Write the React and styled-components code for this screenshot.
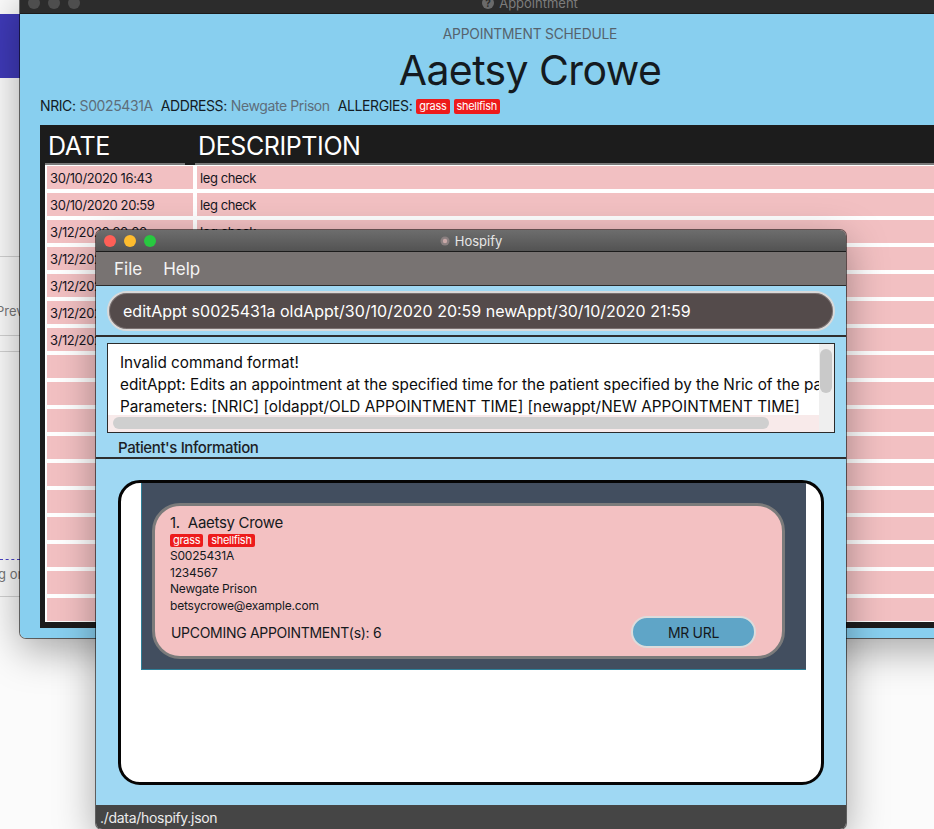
import React from "react";
import styled, { createGlobalStyle } from "styled-components";

const GlobalStyle = createGlobalStyle`
  html, body {
    margin: 0;
    padding: 0;
  }
  body {
    font-family: Inter, "Noto Sans", sans-serif;
    background: #ffffff;
  }
`;

const Desktop = styled.div`
  position: relative;
  width: 934px;
  height: 829px;
  overflow: hidden;
  background: #ffffff;
`;

/* browser page peeking out on the left */
const BrowserPage = styled.div`
  display: flex;
  flex-direction: column;
  height: 100%;
  background: #fbfbfb;
`;
const PageBanner = styled.div`
  margin-top: 14px;
  height: 64px;
  background: #3f3ab8;
`;
const PageRule = styled.div`
  margin-top: ${(p) => p.$gap}px;
  height: 1px;
  width: 20px;
  border-top: 1px ${(p) => (p.$dashed ? "dashed #4a43c9" : "solid #d2d2d2")};
`;
const PageText = styled.div`
  margin-top: ${(p) => p.$gap}px;
  margin-left: ${(p) => p.$shift}px;
  font-size: 13px;
  line-height: 16px;
  color: #777;
  white-space: nowrap;
`;

/* windows on the desktop */
const Window = styled.div`
  position: absolute;
  left: ${(p) => p.$left}px;
  top: ${(p) => p.$top}px;
  width: ${(p) => p.$width}px;
  height: ${(p) => p.$height}px;
  display: flex;
  flex-direction: column;
  border-radius: 6px;
  overflow: hidden;
  box-shadow: 0 12px 40px rgba(0, 0, 0, 0.35), 0 0 0 1px rgba(0, 0, 0, 0.55);
`;

const TitleBar = styled.div`
  position: relative;
  flex: none;
  height: 21px;
  display: flex;
  align-items: center;
  justify-content: center;
  gap: 5px;
  border-bottom: 1px solid #1b1b1b;
  background: ${(p) => (p.$dim ? "#2c2c2c" : "linear-gradient(#6d6d6d, #535353)")};
  color: ${(p) => (p.$dim ? "#7c7c7c" : "#e6e6e6")};
  font-size: 13px;
`;
const Lights = styled.div`
  position: absolute;
  left: 8px;
  top: 0;
  bottom: 0;
  display: flex;
  align-items: center;
  gap: 8px;
`;
const Light = styled.span`
  width: 12px;
  height: 12px;
  border-radius: 50%;
  background: ${(p) => p.$color};
`;

/* Appointment window */
const ApptBody = styled.div`
  flex: 1;
  display: flex;
  flex-direction: column;
  align-items: center;
  padding: 12px 20px 10px;
  background: #88cfef;
  min-height: 0;
`;
const Subtitle = styled.div`
  font-size: 13.8px;
  line-height: 16px;
  color: #56636d;
  letter-spacing: -0.2px;
`;
const BigName = styled.div`
  margin-top: 5px;
  font-size: 41px;
  line-height: 46px;
  color: #141a20;
  letter-spacing: -0.6px;
`;
const InfoRow = styled.div`
  align-self: stretch;
  margin-top: 5px;
  display: flex;
  align-items: center;
  gap: 4px;
  font-size: 14px;
  line-height: 16px;
  letter-spacing: -0.4px;
`;
const InfoLabel = styled.span`
  color: #131c25;
  margin-left: ${(p) => (p.$first ? 0 : 4)}px;
`;
const InfoValue = styled.span`
  color: #5d6d7a;
`;
const Tag = styled.span`
  display: inline-block;
  padding: 0 3px;
  border-radius: 2px;
  background: #ed1b1b;
  color: #fff;
  font-size: 11px;
  line-height: ${(p) => (p.$small ? 13 : 15)}px;
  letter-spacing: -0.3px;
`;
const Table = styled.div`
  align-self: stretch;
  flex: 1;
  margin-top: 11px;
  display: flex;
  flex-direction: column;
  padding: 0 0 6px 5px;
  background: #1c1c1c;
  min-height: 0;
`;
const HeadRow = styled.div`
  display: grid;
  grid-template-columns: 140px 1fr;
  column-gap: 10px;
  height: 40px;
`;
const HeadCell = styled.div`
  display: flex;
  align-items: flex-end;
  padding: 0 0 3px 3px;
  border-bottom: 2px solid #7a7a7a;
  color: #ffffff;
  font-size: 25px;
  line-height: 28px;
  letter-spacing: -0.4px;
`;
const Body = styled.div`
  flex: 1;
  display: grid;
  grid-template-columns: 146px 1fr;
  grid-auto-rows: 23px;
  gap: 4px;
  padding: 1px 0 0 2px;
  background: #ffffff;
  overflow: hidden;
`;
const Cell = styled.div`
  display: flex;
  align-items: center;
  padding-left: 3px;
  background: #f2c0c2;
  color: #16161e;
  font-size: 13px;
  letter-spacing: -0.4px;
  white-space: nowrap;
`;

/* Hospify window */
const MenuBar = styled.div`
  flex: none;
  height: 33px;
  display: flex;
  align-items: center;
  gap: 21px;
  padding-left: 18px;
  background: #787372;
  border-bottom: 1px solid #2b2b2b;
  color: #f4f4f4;
  font-size: 17px;
`;
const Main = styled.div`
  flex: 1;
  display: flex;
  flex-direction: column;
  background: #9fd8f3;
  min-height: 0;
`;
const CommandSection = styled.div`
  padding: 5px 11px 4px;
  border-bottom: 2px solid #2e2e2e;
`;
const CommandBox = styled.div`
  height: 36px;
  display: flex;
  align-items: center;
  padding-left: 14px;
  border: 2px solid #d9d9d9;
  border-radius: 20px;
  background: #544b4b;
  box-shadow: inset 0 0 0 1px #7a7070;
  color: #ffffff;
  font-size: 16px;
  white-space: nowrap;
`;
const ResultSection = styled.div`
  padding: 6px 11px 0;
  border-bottom: 2px solid #2e2e2e;
`;
const ResultBox = styled.div`
  height: 88px;
  display: grid;
  grid-template-columns: minmax(0, 1fr) 15px;
  grid-template-rows: minmax(0, 1fr) 17px;
  border: 1px solid #2b2b2b;
  background: #ffffff;
`;
const ResultText = styled.div`
  grid-column: 1;
  grid-row: 1;
  padding: 8px 0 0 12px;
  overflow: hidden;
  color: #0c0c0c;
  font-size: 15.3px;
  line-height: 22px;
  white-space: nowrap;
`;
const VTrack = styled.div`
  grid-column: 2;
  grid-row: 1 / span 2;
  padding: 5px 2px 0 1px;
  background: #efefef;
`;
const VThumb = styled.div`
  height: 44px;
  border-radius: 6px;
  background: #c9c9c9;
`;
const HTrack = styled.div`
  grid-column: 1;
  grid-row: 2;
  padding: 2px 50px 3px 5px;
  background: #f8eaea;
`;
const HThumb = styled.div`
  height: 12px;
  border-radius: 6px;
  background: #cfcfcf;
`;
const SectionLabel = styled.div`
  padding: 5px 0 0 11px;
  height: 19px;
  color: #1d2125;
  font-size: 15px;
  font-weight: 500;
  line-height: 19px;
  letter-spacing: -0.4px;
`;
const ListSection = styled.div`
  flex: 1;
  display: flex;
  padding: 21px 22px 20px;
  min-height: 0;
`;
const ListFrame = styled.div`
  flex: 1;
  display: flex;
  flex-direction: column;
  align-items: flex-start;
  padding: 0 15px 0 20px;
  border: 3px solid #050505;
  border-radius: 22px;
  background: #ffffff;
`;
const CardPanel = styled.div`
  align-self: stretch;
  padding: 20px 21px 10px 10px;
  background: #424e5f;
  border-bottom: 1px solid #2e7f98;
  border-left: 1px solid #2e7f98;
`;
const Card = styled.div`
  display: flex;
  flex-direction: column;
  align-items: flex-start;
  padding: 7px 26px 8px 15px;
  border: 3px solid #7b7b7b;
  border-radius: 28px;
  background: #f3c1c2;
  color: #15191d;
  letter-spacing: -0.3px;
`;
const CardName = styled.div`
  display: flex;
  gap: 8px;
  font-size: 15px;
  line-height: 19px;
`;
const TagRow = styled.div`
  margin: 2px 0 1px;
  display: flex;
  gap: 5px;
`;
const CardLine = styled.div`
  font-size: 12px;
  line-height: 16.5px;
  letter-spacing: -0.2px;
`;
const CardFooter = styled.div`
  align-self: stretch;
  margin-top: 2px;
  display: flex;
  align-items: center;
  justify-content: space-between;
  padding-left: 1px;
  font-size: 14px;
`;
const UrlButton = styled.div`
  width: 121px;
  height: 28px;
  display: flex;
  align-items: center;
  justify-content: center;
  border: 2px solid #dcdcdc;
  border-radius: 16px;
  background: #5fa5c7;
  color: #15191d;
  font-size: 14px;
`;
const StatusBar = styled.div`
  flex: none;
  height: 24px;
  display: flex;
  align-items: center;
  padding-left: 4px;
  background: #454545;
  color: #ececec;
  font-size: 14px;
  letter-spacing: -0.3px;
`;

const appointments = [
  ["30/10/2020 16:43", "leg check"],
  ["30/10/2020 20:59", "leg check"],
  ["3/12/2020 20:00", "leg check"],
  ["3/12/2020 20:30", "leg check"],
  ["3/12/2020 21:00", "leg check"],
  ["3/12/2020 21:30", "leg check"],
  ["3/12/2020 22:00", "leg check"],
];
const rows = Array.from({ length: 17 }, (_, i) => appointments[i] || ["", ""]);

function HospifyIcon() {
  return (
    <svg width="10" height="10" viewBox="0 0 10 10">
      <circle cx="5" cy="5" r="4.5" fill="#8a7f80" />
      <circle cx="5" cy="5" r="2.2" fill="#c9a8a8" />
    </svg>
  );
}

function HelpIcon() {
  return (
    <svg width="12" height="12" viewBox="0 0 12 12">
      <circle cx="6" cy="6" r="6" fill="#6a6a6a" />
      <text x="6" y="9.5" textAnchor="middle" fontSize="10" fontWeight="700" fill="#2c2c2c" fontFamily="Inter, sans-serif">
        ?
      </text>
    </svg>
  );
}

export default function App() {
  return (
    <Desktop>
      <GlobalStyle />
      <BrowserPage>
        <PageBanner />
        <PageRule $gap={178} />
        <PageText $gap={45} $shift={-4}>Preview</PageText>
        <PageRule $gap={16} />
        <PageRule $gap={14} />
        <PageRule $gap={206} $dashed />
        <PageText $gap={5} $shift={-2}>g or</PageText>
        <PageRule $gap={14} />
      </BrowserPage>

      <Window $left={20} $top={-8} $width={1020} $height={646}>
        <TitleBar $dim>
          <Lights>
            <Light $color="#4e4e4e" />
            <Light $color="#4e4e4e" />
            <Light $color="#4e4e4e" />
          </Lights>
          <HelpIcon />
          Appointment
        </TitleBar>
        <ApptBody>
          <Subtitle>APPOINTMENT SCHEDULE</Subtitle>
          <BigName>Aaetsy Crowe</BigName>
          <InfoRow>
            <InfoLabel $first>NRIC:</InfoLabel>
            <InfoValue>S0025431A</InfoValue>
            <InfoLabel>ADDRESS:</InfoLabel>
            <InfoValue>Newgate Prison</InfoValue>
            <InfoLabel>ALLERGIES:</InfoLabel>
            <Tag>grass</Tag>
            <Tag>shellfish</Tag>
          </InfoRow>
          <Table>
            <HeadRow>
              <HeadCell>DATE</HeadCell>
              <HeadCell>DESCRIPTION</HeadCell>
            </HeadRow>
            <Body>
              {rows.map(([date, desc], i) => (
                <React.Fragment key={i}>
                  <Cell>{date}</Cell>
                  <Cell>{desc}</Cell>
                </React.Fragment>
              ))}
            </Body>
          </Table>
        </ApptBody>
      </Window>

      <Window $left={96} $top={230} $width={750} $height={599}>
        <TitleBar>
          <Lights>
            <Light $color="#fe5f57" />
            <Light $color="#febc2e" />
            <Light $color="#28c840" />
          </Lights>
          <HospifyIcon />
          Hospify
        </TitleBar>
        <MenuBar>
          <span>File</span>
          <span>Help</span>
        </MenuBar>
        <Main>
          <CommandSection>
            <CommandBox>editAppt s0025431a oldAppt/30/10/2020 20:59 newAppt/30/10/2020 21:59</CommandBox>
          </CommandSection>
          <ResultSection>
            <ResultBox>
              <ResultText>
                Invalid command format!
                <br />
                editAppt: Edits an appointment at the specified time for the patient specified by the Nric of the patient.
                <br />
                Parameters: [NRIC] [oldappt/OLD APPOINTMENT TIME] [newappt/NEW APPOINTMENT TIME]
              </ResultText>
              <VTrack>
                <VThumb />
              </VTrack>
              <HTrack>
                <HThumb />
              </HTrack>
            </ResultBox>
            <SectionLabel>Patient's Information</SectionLabel>
          </ResultSection>
          <ListSection>
            <ListFrame>
              <CardPanel>
                <Card>
                  <CardName>
                    <span>1.</span>
                    <span>Aaetsy Crowe</span>
                  </CardName>
                  <TagRow>
                    <Tag $small>grass</Tag>
                    <Tag $small>shellfish</Tag>
                  </TagRow>
                  <CardLine>S0025431A</CardLine>
                  <CardLine>1234567</CardLine>
                  <CardLine>Newgate Prison</CardLine>
                  <CardLine>betsycrowe@example.com</CardLine>
                  <CardFooter>
                    <span>UPCOMING APPOINTMENT(s): 6</span>
                    <UrlButton>MR URL</UrlButton>
                  </CardFooter>
                </Card>
              </CardPanel>
            </ListFrame>
          </ListSection>
        </Main>
        <StatusBar>./data/hospify.json</StatusBar>
      </Window>
    </Desktop>
  );
}
